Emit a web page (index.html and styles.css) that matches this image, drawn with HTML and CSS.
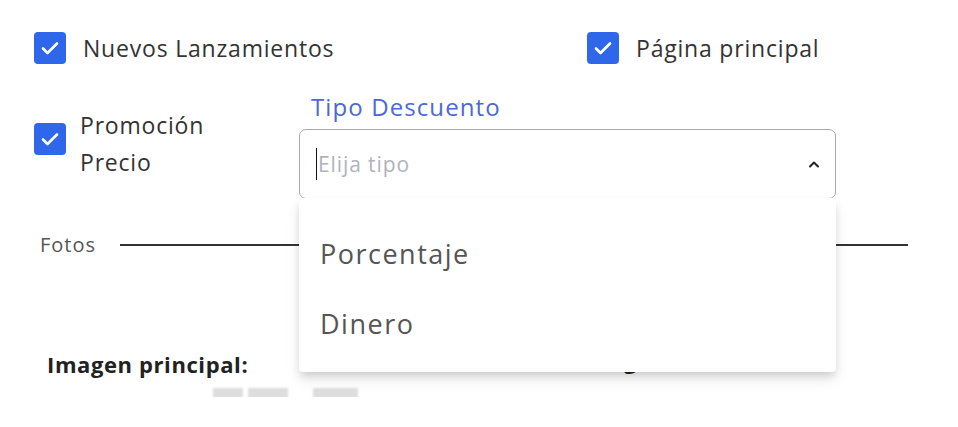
FILE: index.html
```html
<!DOCTYPE html>
<html lang="es">
<head>
<meta charset="utf-8">
<title>Producto</title>
<link rel="stylesheet" href="styles.css">
</head>
<body>
<div class="page">
  <div class="row-top">
    <label class="check">
      <span class="box"><svg viewBox="0 0 32 32" width="32" height="32"><path d="M9 16.5l4.5 4.5L23 11.5" fill="none" stroke="#fff" stroke-width="2.6" stroke-linecap="round" stroke-linejoin="round"/></svg></span>
      <span class="check-text">Nuevos Lanzamientos</span>
    </label>
    <label class="check">
      <span class="box"><svg viewBox="0 0 32 32" width="32" height="32"><path d="M9 16.5l4.5 4.5L23 11.5" fill="none" stroke="#fff" stroke-width="2.6" stroke-linecap="round" stroke-linejoin="round"/></svg></span>
      <span class="check-text">Página principal</span>
    </label>
  </div>

  <div class="row-mid">
    <label class="check check-multi">
      <span class="box"><svg viewBox="0 0 32 32" width="32" height="32"><path d="M9 16.5l4.5 4.5L23 11.5" fill="none" stroke="#fff" stroke-width="2.6" stroke-linecap="round" stroke-linejoin="round"/></svg></span>
      <span class="check-text multi">Promoción<br>Precio</span>
    </label>
    <div class="field">
      <div class="field-label">Tipo Descuento</div>
      <div class="select">
        <span class="caret"></span>
        <span class="placeholder">Elija tipo</span>
        <svg class="chev" viewBox="0 0 12 8" width="12" height="8"><path d="M2 6.5L6 2.5l4 4" fill="none" stroke="#222" stroke-width="2" stroke-linecap="round" stroke-linejoin="round"/></svg>
      </div>
      <div class="menu">
        <div class="menu-item">Porcentaje</div>
        <div class="menu-item">Dinero</div>
      </div>
    </div>
  </div>

  <div class="divider">
    <span class="divider-text">Fotos</span>
    <span class="divider-line"></span>
  </div>

  <div class="images">
    <div class="img-col first">
      <div class="img-label">Imagen principal:</div>
      <div class="thumbs">
        <span class="thumb t1"></span>
        <span class="thumb t2"></span>
        <span class="thumb t3"></span>
      </div>
    </div>
    <div class="img-col second">
      <div class="img-label">Imagenes:</div>
    </div>
  </div>
</div>
</body>
</html>
```

FILE: styles.css
```css
* { box-sizing: border-box; }
html, body { margin: 0; padding: 0; background: #fff; }
body {
  font-family: "Open Sans", "Lato", sans-serif;
  color: #333;
}
.page {
  height: 397px;
  overflow: hidden;
  padding: 32px 0 0 34px;
  position: relative;
}
.row-top {
  display: grid;
  grid-template-columns: 553px 1fr;
  height: 32px;
}
.check {
  display: flex;
  align-items: center;
  gap: 17px;
}
.box {
  width: 32px;
  height: 32px;
  border-radius: 4px;
  background: #2f67ea;
  display: block;
  flex: none;
}
.box svg { display: block; }
.check-text {
  font-size: 23px;
  letter-spacing: 0.8px;
  color: #333;
  line-height: 32px;
  white-space: nowrap;
}
.row-mid {
  display: flex;
  margin-top: 26px;
}
.check-multi {
  width: 265px;
  gap: 14px;
  align-items: flex-start;
  margin-top: 17px;
}
.check-multi .box { margin-top: 16px; }
.check-text.multi { line-height: 37px; }
.field {
  width: 537px;
  position: relative;
}
.field-label {
  font-size: 24px;
  letter-spacing: 1.1px;
  color: #4a69d6;
  padding-left: 12px;
  line-height: 36px;
  margin-top: -1px;
  margin-bottom: 4px;
}
.select {
  height: 70px;
  border: 1px solid #a9a9a9;
  border-radius: 7px;
  display: flex;
  align-items: center;
  padding: 0 16px 0 16px;
}
.caret {
  width: 1px;
  height: 32px;
  background: #111;
  margin-right: 1px;
}
.placeholder {
  font-size: 21px;
  letter-spacing: 0.9px;
  color: #b0b3bb;
  flex: 1;
}
.chev { display: block; margin-right: -1px; }
.menu {
  position: absolute;
  left: 0;
  right: 0;
  top: 108px;
  background: #fff;
  border-radius: 4px;
  box-shadow: 0 5px 8px -2px rgba(0,0,0,0.16), 0 8px 14px 1px rgba(0,0,0,0.07);
  padding: 21px 0 13px;
  z-index: 5;
}
.menu-item {
  height: 70px;
  line-height: 70px;
  padding-left: 21px;
  font-size: 27px;
  letter-spacing: 1.5px;
  color: #555;
}
.divider {
  display: flex;
  align-items: center;
  margin-top: 32px;
  width: 874px;
  padding-left: 6px;
}
.divider-text {
  font-size: 20px;
  line-height: 27px;
  letter-spacing: 1px;
  color: #555;
  margin-right: 24px;
}
.divider-line {
  flex: 1;
  height: 2px;
  background: #333;
}
.images {
  display: flex;
  margin-top: 92px;
}
.img-col.first { width: 546px; padding-left: 13px; }
.img-col.second { margin-top: -4px; }
.img-label {
  font-size: 22px;
  line-height: 29px;
  letter-spacing: 0.6px;
  font-weight: 700;
  color: #222;
}
.thumbs {
  display: flex;
  margin-top: 9px;
  padding-left: 166px;
}
.thumb {
  height: 10px;
  background: #ddd;
  display: block;
  filter: blur(1px);
}
.t1 { width: 30px; }
.t2 { width: 40px; margin-left: 5px; }
.t3 { width: 45px; margin-left: 25px; }
```
